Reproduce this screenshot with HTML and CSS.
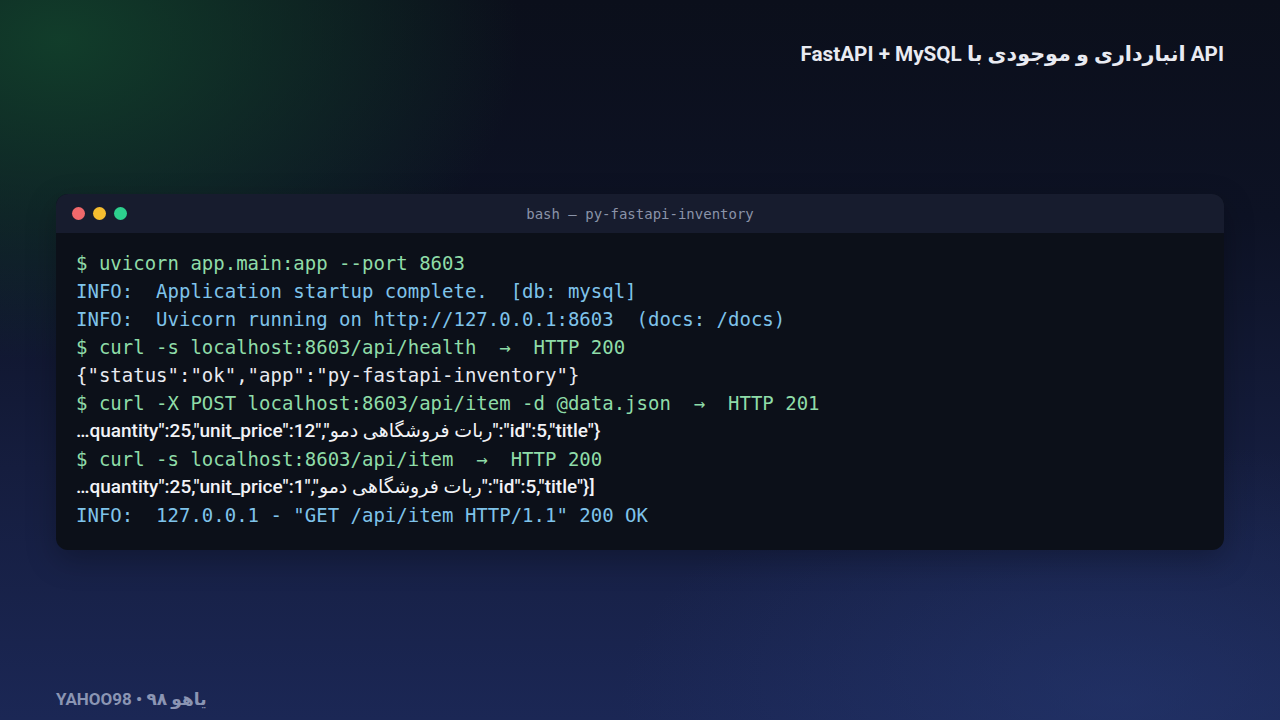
FILE: index.html
```html
<!DOCTYPE html>
<html lang="fa">
<head>
<meta charset="utf-8">
<title>API انبارداری و موجودی</title>
<link rel="stylesheet" href="styles.css">
</head>
<body>
<div class="page">
  <header class="top">
    <h1 class="title" dir="rtl">API انبارداری و موجودی با FastAPI + MySQL</h1>
  </header>
  <main class="stage">
    <section class="term">
      <div class="term-bar">
        <div class="dots">
          <span class="dot red"></span>
          <span class="dot yellow"></span>
          <span class="dot green"></span>
        </div>
        <div class="term-title">bash — py-fastapi-inventory</div>
      </div>
      <div class="term-body">
        <div class="line cmd">$ uvicorn app.main:app --port 8603</div>
        <div class="line info">INFO:  Application startup complete.  [db: mysql]</div>
        <div class="line info">INFO:  Uvicorn running on http://127.0.0.1:8603  (docs: /docs)</div>
        <div class="line cmd">$ curl -s localhost:8603/api/health  →  HTTP 200</div>
        <div class="line out">{"status":"ok","app":"py-fastapi-inventory"}</div>
        <div class="line cmd">$ curl -X POST localhost:8603/api/item -d @data.json  →  HTTP 201</div>
        <div class="line json">…quantity":25,"unit_price":12","<bdi dir="rtl">ربات فروشگاهی دمو</bdi>":"id":5,"title"}</div>
        <div class="line cmd">$ curl -s localhost:8603/api/item  →  HTTP 200</div>
        <div class="line json">…quantity":25,"unit_price":1","<bdi dir="rtl">ربات فروشگاهی دمو</bdi>":"id":5,"title"}]</div>
        <div class="line info">INFO:  127.0.0.1 - "GET /api/item HTTP/1.1" 200 OK</div>
      </div>
    </section>
  </main>
  <footer class="foot">
    <span class="brand" dir="rtl">یاهو ۹۸ • YAHOO98</span>
  </footer>
</div>
</body>
</html>
```

FILE: styles.css
```css
* { box-sizing: border-box; }
html, body { margin: 0; padding: 0; }
body {
  width: 1280px;
  height: 720px;
  overflow: hidden;
  font-family: Roboto, "Noto Sans", "DejaVu Sans", sans-serif;
  background:
    radial-gradient(ellipse 460px 320px at 60px 40px, rgba(18, 66, 44, 0.9), rgba(18, 66, 44, 0) 100%),
    radial-gradient(ellipse 500px 260px at 1120px 700px, rgba(40, 60, 120, 0.45), rgba(40, 60, 120, 0) 100%),
    linear-gradient(180deg, #0b0f1b 0%, #0d1224 30%, #151d3e 65%, #1b2755 100%);
  color: #e8eaf0;
}
.page {
  height: 720px;
  display: flex;
  flex-direction: column;
  padding: 0 56px;
}
.top {
  display: flex;
  justify-content: flex-end;
  padding-top: 40px;
  height: 194px;
}
.title {
  margin: 0;
  font-size: 20.7px;
  font-weight: 700;
  line-height: 28px;
  color: #e9ebf2;
}
.stage { flex: 0 0 auto; }
.term {
  border-radius: 12px;
  overflow: hidden;
  background: #0c1019;
  box-shadow: 0 10px 30px rgba(0, 0, 0, 0.25);
}
.term-bar {
  position: relative;
  height: 39px;
  background: #171c2e;
  display: flex;
  align-items: center;
  padding-left: 16px;
}
.dots { display: flex; gap: 8px; }
.dot { width: 13px; height: 13px; border-radius: 50%; display: block; }
.red { background: #f0686b; }
.yellow { background: #f5bd2f; }
.green { background: #2dd08e; }
.term-title {
  position: absolute;
  left: 0; right: 0; top: 0; bottom: 0;
  display: flex;
  align-items: center;
  justify-content: center;
  font-family: "DejaVu Sans Mono", monospace;
  font-size: 14px;
  color: #8a93a8;
}
.term-body {
  padding: 16px 20px 21px;
}
.line {
  font-family: "DejaVu Sans Mono", monospace;
  font-size: 19px;
  line-height: 28px;
  white-space: pre;
}
.cmd { color: #8fdca8; }
.info { color: #7fc3ea; }
.out { color: #e8eaf0; }
.json {
  font-family: Roboto, "Noto Sans", "DejaVu Sans", sans-serif;
  font-weight: 500;
  font-size: 19px;
  letter-spacing: 0;
  color: #f2f3f7;
}
.foot {
  margin-top: auto;
  padding-bottom: 10px;
  display: flex;
}
.brand {
  font-size: 17px;
  font-weight: 700;
  color: #8b95b3;
  line-height: 22px;
}
```
